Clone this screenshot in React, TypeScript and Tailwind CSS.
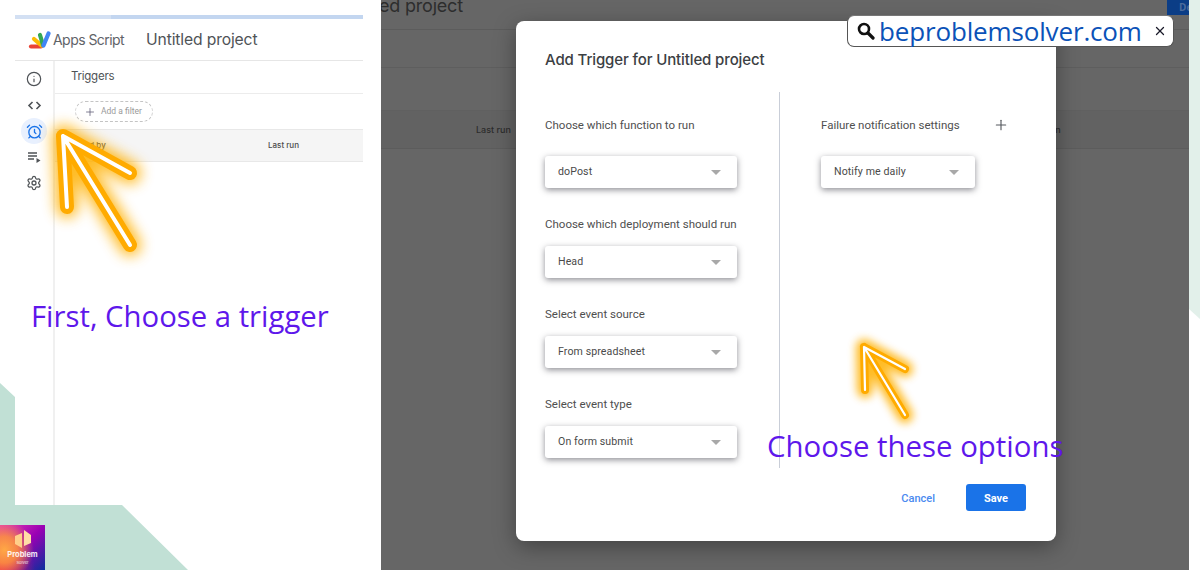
import React from "react";
import { Info, AlarmClock, Settings, Plus, X } from "lucide-react";

const ROBOTO = "font-['Roboto',sans-serif]";

function GlowArrow({ className, tip, end, left, right, outer, inner, blur, view }: {
  className: string; tip: string; end: string; left: string; right: string; outer: number; inner: number; blur: number; view: string;
}) {
  const d = `M${left} L${tip} L${right} M${tip} L${end}`;
  const id = `glow${outer}`;
  return (
    <svg className={className} viewBox={view} fill="none" strokeLinecap="round" strokeLinejoin="round">
      <defs>
        <filter id={id} x="-50%" y="-50%" width="200%" height="200%">
          <feGaussianBlur stdDeviation={blur} />
        </filter>
      </defs>
      <path d={d} stroke="#ffb000" strokeWidth={outer + 8} filter={`url(#${id})`} opacity="0.85" />
      <path d={d} stroke="#ffab00" strokeWidth={outer} />
      <path d={d} stroke="#ffffff" strokeWidth={inner} />
    </svg>
  );
}

function Select({ text, width = "w-[192px]" }: { text: string; width?: string }) {
  return (
    <div className={`${width} h-[32px] shrink-0 bg-white rounded-[3px] flex items-center justify-between pl-[13px] pr-[16px] shadow-[0_2px_6px_rgba(50,50,60,0.55)]`}>
      <span className="text-[10.6px] tracking-[0.1px] text-[#4a4a4a]">{text}</span>
      <span className="w-0 h-0 border-x-[5px] border-x-transparent border-t-[5px] border-t-[#a8a8a8]" />
    </div>
  );
}

function Label({ text }: { text: string }) {
  return <div className="h-[16px] leading-[16px] text-[11.5px] text-[#4f4f4f] whitespace-nowrap">{text}</div>;
}

function LeftPanel() {
  return (
    <div className="w-[381px] shrink-0 pt-[15px] pl-[15px] pr-[18px] h-[570px] flex flex-col">
      <div className="h-[4px] flex">
        <div className="w-[96px] bg-[#d3e0f3]" />
        <div className="flex-1 bg-[#c3d6f0]" />
      </div>
      <div className="h-[42px] flex items-center border-b border-[#e6e6e6] shrink-0">
        <svg className="ml-[13px] w-[23px] h-[20px]" viewBox="0 0 23 20" fill="none" strokeLinecap="round">
          <path d="M3 16.5 H13" stroke="#ea4335" strokeWidth="4.2" />
          <path d="M6 9 L13.5 15.5" stroke="#fbbc04" strokeWidth="4.2" />
          <path d="M12 5 L15 15" stroke="#34a853" strokeWidth="4.2" />
          <path d="M20.5 3.5 L15.5 15.5" stroke="#4285f4" strokeWidth="4.2" />
        </svg>
        <span className="ml-[2px] text-[14px] text-[#5f6368] font-['Inter',sans-serif] tracking-[-0.55px]">Apps Script</span>
        <span className="ml-[22px] text-[15.7px] text-[#4f5357] font-['Inter',sans-serif] tracking-[-0.15px]">Untitled project</span>
      </div>
      <div className="flex-1 flex min-h-0">
        <div className="w-[40px] shrink-0 border-r-2 border-[#f0f0f0] flex flex-col items-center pt-[5px] text-[#4f5357]">
          <div className="h-[26px] flex items-center justify-center"><Info size={16} strokeWidth={1.8} /></div>
          <div className="h-[26px] flex items-center justify-center">
            <svg className="w-[15px] h-[15px]" viewBox="0 0 15 15" fill="none" stroke="currentColor" strokeWidth="1.6">
              <path d="M5.5 4 L2 7.5 L5.5 11 M9.5 4 L13 7.5 L9.5 11" />
            </svg>
          </div>
          <div className="w-[26px] h-[26px] rounded-full bg-[#e8f0fe] flex items-center justify-center text-[#1a73e8]"><AlarmClock size={17} strokeWidth={1.9} /></div>
          <div className="h-[26px] flex items-center justify-center">
            <svg className="w-[15px] h-[15px]" viewBox="0 0 15 15" fill="none" stroke="currentColor" strokeWidth="1.3">
              <path d="M1 3 H10 M1 6 H10 M1 9 H7" />
              <path d="M9.5 8 L13.5 10.5 L9.5 13 Z" fill="currentColor" stroke="none" />
            </svg>
          </div>
          <div className="h-[25px] flex items-center justify-center"><Settings size={16} strokeWidth={1.9} /></div>
        </div>
        <div className="flex-1 flex flex-col">
          <div className="h-[33px] shrink-0 flex items-center pl-[16px] border-b border-[#ececec] text-[11.5px] text-[#4f5357] font-['Inter',sans-serif] tracking-[-0.25px]">Triggers</div>
          <div className="h-[35px] shrink-0 flex items-center pl-[20px]">
            <div className="w-[78px] h-[21px] rounded-full border border-dashed border-[#c4c4c4] flex items-center pl-[8px] gap-[5px]">
              <Plus size={12} strokeWidth={1.5} className="text-[#5a5670]" />
              <span className={`text-[8.5px] text-[#9a9a9a] ${ROBOTO}`}>Add a filter</span>
            </div>
          </div>
          <div className="h-[33px] shrink-0 bg-[#f5f5f5] border-y border-[#e8e8e8] flex items-center pl-[12px] pb-[1px] text-[8px] font-medium text-[#4a4a4a] font-['Inter',sans-serif]">
            <span className="w-[201px]">Owned by</span>
            <span>Last run</span>
          </div>
        </div>
      </div>
    </div>
  );
}

function DarkPanel() {
  return (
    <div className="w-[808px] shrink-0 h-[570px] bg-[#666666] flex flex-col overflow-hidden text-[#2c2c2c]">
      <div className="h-[30px] shrink-0 border-b border-[#5c5c5c] flex justify-between">
        <span className="-ml-[2px] -mt-[8px] h-[28px] leading-[28px] text-[18px] text-[#2d2d2d] font-['Inter',sans-serif] tracking-[-0.2px]">ed project</span>
        <div className="w-[22px] h-[15px] bg-[#0b3d86] pl-[12px] text-[10px] leading-[14px] font-bold text-[#4d6c9c] overflow-hidden">De</div>
      </div>
      <div className="h-[38px] shrink-0 border-b border-[#5e5e5e]" />
      <div className="h-[43px] shrink-0 border-b border-[#606060]" />
      <div className="h-[38px] shrink-0 bg-[#626262] border-b border-[#5c5c5c] flex items-center pl-[95px] text-[9px] font-['Inter',sans-serif] font-medium">
        <span>Last run</span>
        <span className="ml-[515px]">Last run</span>
      </div>
    </div>
  );
}

function Dialog() {
  return (
    <div className={`absolute left-[516px] top-[21px] w-[540px] h-[520px] bg-white rounded-[8px] shadow-[0_6px_22px_rgba(0,0,0,0.35)] pl-[29px] pr-[30px] flex flex-col ${ROBOTO}`}>
      <div className="h-[71px] shrink-0 pt-[28px] text-[15px] leading-[22px] font-medium text-[#3c4043] font-['Inter',sans-serif] tracking-[-0.12px]">Add Trigger for Untitled project</div>
      <div className="h-[376px] shrink-0 flex">
        <div className="w-[235px] shrink-0 border-r border-[#c9ced8] pt-[25px] flex flex-col">
          <Label text="Choose which function to run" />
          <div className="mt-[23px]"><Select text="doPost" /></div>
          <div className="mt-[28px]"><Label text="Choose which deployment should run" /></div>
          <div className="mt-[14px]"><Select text="Head" /></div>
          <div className="mt-[28px]"><Label text="Select event source" /></div>
          <div className="mt-[14px]"><Select text="From spreadsheet" /></div>
          <div className="mt-[28px]"><Label text="Select event type" /></div>
          <div className="mt-[14px]"><Select text="On form submit" /></div>
        </div>
        <div className="flex-1 pl-[41px] pt-[25px] flex flex-col">
          <div className="flex items-center">
            <Label text="Failure notification settings" />
            <Plus size={16} strokeWidth={1.7} className="ml-[33px] text-[#55595e]" />
          </div>
          <div className="mt-[23px]"><Select text="Notify me daily" width="w-[154px]" /></div>
        </div>
      </div>
      <div className="mt-[16px] flex justify-end items-center gap-[30px]">
        <span className="pt-[3px] mr-[1px] text-[11px] font-medium text-[#4a8af0]">Cancel</span>
        <div className="w-[60px] h-[27px] pt-[3px] bg-[#1a73e8] rounded-[3px] flex items-center justify-center text-[11px] font-bold text-white">Save</div>
      </div>
    </div>
  );
}

export default function App() {
  return (
    <div className="relative w-[1200px] h-[570px] overflow-hidden bg-white flex font-['Open_Sans',sans-serif]">
      <LeftPanel />
      <DarkPanel />

      <svg className="absolute left-0 top-0 w-[1200px] h-[570px] pointer-events-none" viewBox="0 0 1200 570">
        <polygon points="0,383 15,397 15,505 122,505 188,570 0,570" fill="#c1e0d5" />
        <polygon points="1189,0 1200,0 1200,319 1189,309" fill="#e2f0ea" />
      </svg>

      <Dialog />

      <GlowArrow
        className="absolute left-0 top-0 w-[1200px] h-[570px] pointer-events-none"
        view="0 0 1200 570"
        tip="63,136" end="130,245" left="67,207" right="130,173"
        outer={14} inner={4} blur={7}
      />
      <GlowArrow
        className="absolute left-0 top-0 w-[1200px] h-[570px] pointer-events-none"
        view="0 0 1200 570"
        tip="864,347" end="905,415" left="865,390" right="905,369"
        outer={8} inner={2.2} blur={4}
      />

      <div className="absolute left-[31px] top-[296px] text-[29.3px] leading-[40px] text-[#5e17eb] whitespace-nowrap">First, Choose a trigger</div>
      <div className="absolute left-[767px] top-[426px] text-[29.4px] leading-[40px] text-[#5e17eb] whitespace-nowrap">Choose these options</div>

      <div className="absolute left-[847px] top-[15px] w-[327px] h-[32px] bg-white rounded-[7px] border border-[#555] border-t-[#777] flex items-center pl-[9px]">
        <svg className="w-[18px] h-[18px]" viewBox="0 0 18 18" fill="none" stroke="#111" strokeWidth="2.6" strokeLinecap="round">
          <circle cx="7" cy="7" r="5" />
          <path d="M11 11 L16 16" strokeWidth="3.2" />
        </svg>
        <span className="ml-[4px] text-[26px] leading-[30px] text-[#0b52b8] tracking-[-0.15px]">beproblemsolver.com</span>
        <X size={14} strokeWidth={2.2} className="ml-[11px] text-[#1a1a2a]" />
      </div>

      <div className="absolute left-0 top-[525px] w-[45px] h-[45px] overflow-hidden flex flex-col items-center bg-[radial-gradient(circle_at_10%_55%,#ffa845_0%,rgba(255,150,60,0.85)_28%,rgba(255,100,80,0)_62%),radial-gradient(circle_at_0%_100%,#e8204f_0%,rgba(232,32,79,0)_55%),linear-gradient(135deg,#e83fb0_0%,#9a00b4_50%,#0a2f9c_100%)]">
        <svg className="mt-[5px] w-[18px] h-[20px]" viewBox="0 0 18 20">
          <polygon points="1,6 8,3 8,18 1,14" fill="#ffcf8a" />
          <polygon points="10,0 17,5 17,13 10,16" fill="#ffdca6" />
        </svg>
        <span className="mt-[1px] text-[7.5px] leading-[8px] font-bold text-white/90 font-['Inter',sans-serif]">Problem</span>
        <span className="text-[4px] leading-[7px] text-white/80 font-['Inter',sans-serif]">Solver</span>
      </div>
    </div>
  );
}
